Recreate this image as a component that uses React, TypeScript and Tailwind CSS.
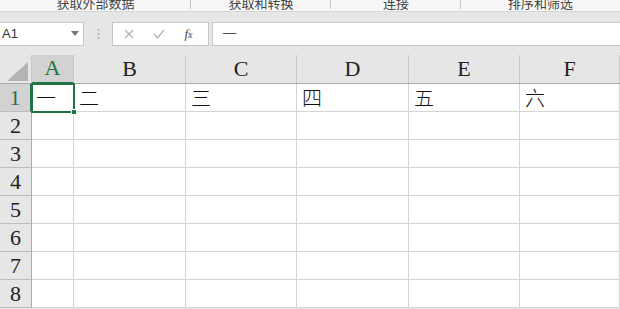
import React from 'react';

const cols = [
  { label: 'A', w: 'w-[42px]' },
  { label: 'B', w: 'w-[112px]' },
  { label: 'C', w: 'w-[111px]' },
  { label: 'D', w: 'w-[112px]' },
  { label: 'E', w: 'w-[111px]' },
  { label: 'F', w: 'flex-1' },
];

const firstRow = ['一', '二', '三', '四', '五', '六'];
const rows = [1, 2, 3, 4, 5, 6, 7, 8];

const groups = [
  { label: '获取外部数据', w: 'w-[191px]' },
  { label: '获取和转换', w: 'w-[140px]' },
  { label: '连接', w: 'w-[130px]' },
  { label: '排序和筛选', w: 'flex-1' },
];

export default function App() {
  return (
    <div className="w-[620px] h-[309px] overflow-hidden bg-[#e6e6e6] font-['Liberation_Sans','Noto_Sans_CJK_SC',sans-serif]">
      {/* ribbon group labels, cut at the top like the window */}
      <div className="flex h-[12px] bg-[#f7f7f7] border-b border-[#d6d6d6] overflow-hidden">
        {groups.map((g, i) => (
          <div key={g.label} className={`${g.w} relative flex justify-center`}>
            <span className="text-[13px] leading-[13px] -mt-[3px] text-[#444]">{g.label}</span>
            {i < groups.length - 1 && (
              <div className="absolute right-0 top-0 h-[9px] w-px bg-[#c8c8c8]" />
            )}
          </div>
        ))}
      </div>

      {/* formula bar */}
      <div className="flex items-center h-[43px] py-[9px]">
        <div className="w-[84px] h-[24px] bg-white border border-l-0 border-[#c6c6c6] flex items-center justify-between pl-[2px] pr-[4px]">
          <span className="text-[13px] text-[#333]">A1</span>
          <svg width="8" height="5" viewBox="0 0 8 5">
            <path d="M0 0 L8 0 L4 5 Z" fill="#777" />
          </svg>
        </div>
        <div className="w-[28px] flex justify-center">
          <svg width="3" height="12" viewBox="0 0 3 12">
            <circle cx="1.5" cy="2" r="1" fill="#aaa" />
            <circle cx="1.5" cy="6" r="1" fill="#aaa" />
            <circle cx="1.5" cy="10" r="1" fill="#aaa" />
          </svg>
        </div>
        <div className="w-[97px] h-[24px] bg-white border border-[#c6c6c6] flex items-center justify-around pl-[2px] pr-[6px]">
          <svg width="10" height="10" viewBox="0 0 10 10">
            <path d="M1 1 L9 9 M9 1 L1 9" stroke="#b0b0b0" strokeWidth="1.2" />
          </svg>
          <svg width="12" height="10" viewBox="0 0 12 10">
            <path d="M1 5 L4.5 9 L11 1" stroke="#b0b0b0" strokeWidth="1.3" fill="none" />
          </svg>
          <span className="font-['Liberation_Serif',serif] italic text-[13px] text-[#444]">
            f<span className="text-[10px]">x</span>
          </span>
        </div>
        <div className="ml-[3px] flex-1 h-[24px] bg-white border border-r-0 border-[#c6c6c6] flex items-center pl-[9px]">
          <span className="text-[15px] font-light text-[#222] font-['Noto_Sans_CJK_SC',sans-serif]">一</span>
        </div>
      </div>

      {/* column headers */}
      <div className="flex h-[29px] border-b border-[#ababab] font-['Liberation_Serif','Noto_Sans_CJK_SC',serif]">
        <div className="w-[32px] border-r border-[#c8c8c8] flex items-end justify-end pr-[3px] pb-[2px]">
          <svg width="21" height="19" viewBox="0 0 21 19">
            <path d="M21 0 L21 19 L0 19 Z" fill="#b4b4b4" />
          </svg>
        </div>
        {cols.map((c, i) => (
          <div
            key={c.label}
            className={`${c.w} flex items-end justify-center pb-[2px] border-r border-[#c8c8c8] text-[22px] leading-[24px] ${
              i === 0 ? 'bg-[#d2d2d2] text-[#217346] border-b-2 border-b-[#217346] -mb-px' : 'text-[#222]'
            }`}
          >
            {c.label}
          </div>
        ))}
      </div>

      {/* grid */}
      <div className="relative">
        {rows.map((r) => (
          <div key={r} className="flex h-[28px]">
            <div
              className={`w-[32px] flex items-end justify-center pb-[1px] border-r border-b font-['Liberation_Serif',serif] text-[22px] leading-[24px] ${
                r === 1
                  ? 'bg-[#d2d2d2] text-[#217346] border-r-2 border-r-[#217346] border-b-[#bdbdbd]'
                  : 'bg-[#e6e6e6] text-[#222] border-r-[#ababab] border-b-[#bdbdbd]'
              }`}
            >
              {r}
            </div>
            {cols.map((c, i) => (
              <div
                key={c.label}
                className={`${c.w} bg-white border-r border-b border-[#d4d4d4] flex items-end pb-[1px] ${
                  i === 0 ? 'pl-[4px]' : 'pl-[5px]'
                } text-[20px] leading-[24px] font-light text-[#111] font-['Noto_Sans_CJK_SC',serif]`}
              >
                {r === 1 ? firstRow[i] : ''}
              </div>
            ))}
          </div>
        ))}
        {/* active cell */}
        <div className="absolute left-[31px] top-[-1px] w-[44px] h-[30px] border-2 border-[#217346] pointer-events-none" />
        <div className="absolute left-[71px] top-[25px] w-[6px] h-[6px] bg-[#217346] border border-white" />
      </div>
    </div>
  );
}
